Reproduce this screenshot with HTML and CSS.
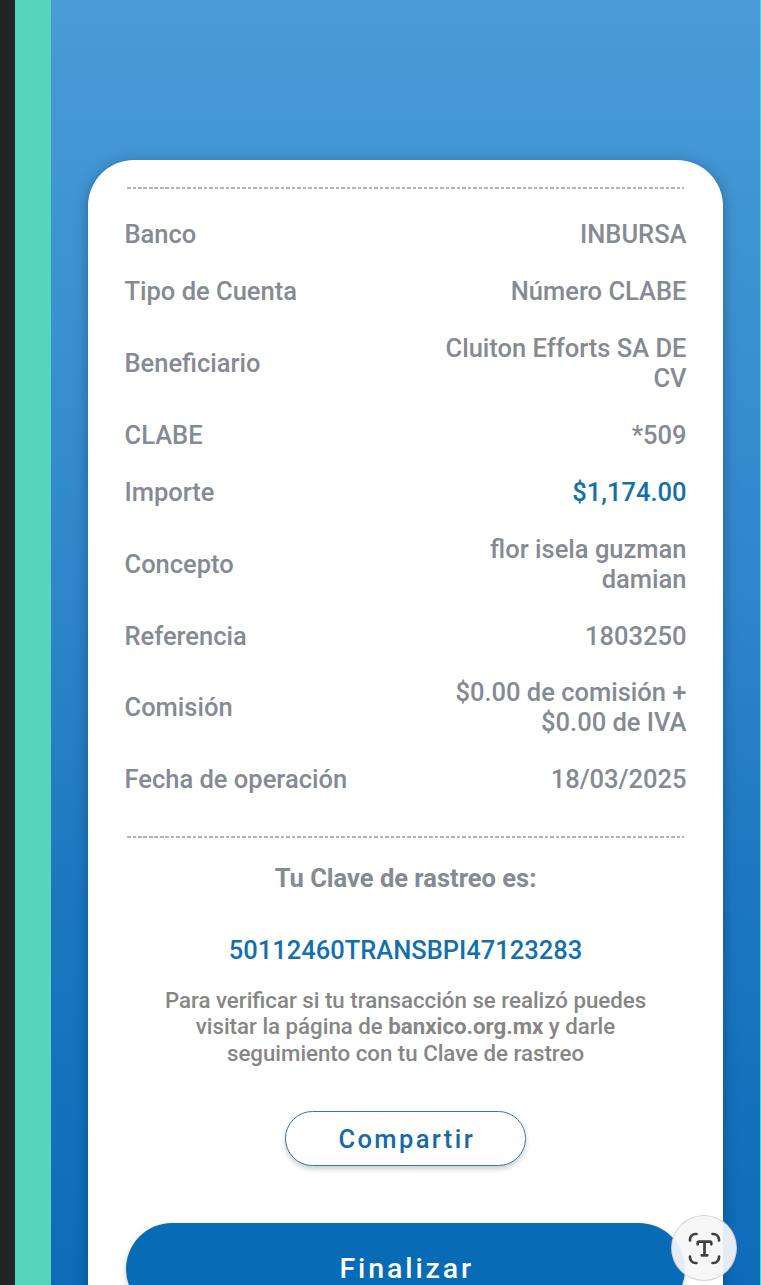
FILE: index.html
```html
<!DOCTYPE html>
<html lang="es">
<head>
  <meta charset="UTF-8">
  <meta name="viewport" content="width=device-width, initial-scale=1.0">
  <title>Comprobante</title>
  <link rel="stylesheet" href="styles.css">
</head>
<body>
  <div class="screen">
    <!-- Receipt card -->
    <main class="card">
      <div class="divider"></div>

      <dl class="details">
        <div class="row"><dt>Banco</dt><dd>INBURSA</dd></div>
        <div class="row"><dt>Tipo de Cuenta</dt><dd>Número CLABE</dd></div>
        <div class="row"><dt>Beneficiario</dt><dd>Cluiton Efforts SA DE<br>CV</dd></div>
        <div class="row"><dt>CLABE</dt><dd>*509</dd></div>
        <div class="row"><dt>Importe</dt><dd class="amount">$1,174.00</dd></div>
        <div class="row"><dt>Concepto</dt><dd>flor isela guzman<br>damian</dd></div>
        <div class="row"><dt>Referencia</dt><dd>1803250</dd></div>
        <div class="row"><dt>Comisión</dt><dd>$0.00 de comisión +<br>$0.00 de IVA</dd></div>
        <div class="row"><dt>Fecha de operación</dt><dd>18/03/2025</dd></div>
      </dl>

      <div class="divider"></div>

      <!-- Tracking key -->
      <h2 class="tracking-title">Tu Clave de rastreo es:</h2>
      <p class="tracking-key">50112460TRANSBPI47123283</p>
      <p class="note">Para verificar si tu transacción se realizó puedes<br>visitar la página de <b>banxico.org.mx</b> y darle<br>seguimiento con tu Clave de rastreo</p>

      <!-- Actions -->
      <button type="button" class="btn-share">Compartir</button>
      <button type="button" class="btn-finish">Finalizar</button>
    </main>
  </div>

  <!-- Text scan button -->
  <div class="scan-button">
    <svg width="33" height="33" viewBox="0 0 33 33" fill="none" stroke="#3f4043" stroke-width="2.7" stroke-linecap="round" stroke-linejoin="round">
      <path d="M2 8.500V7.500a5.500 5.500 0 0 1 5.500-5.500h1M24.500 2h1a5.500 5.500 0 0 1 5.500 5.500v1M31 24.500v1a5.500 5.500 0 0 1-5.500 5.500h-1M8.500 31h-1A5.500 5.500 0 0 1 2 25.500v-1"/>
      <path d="M9.700 12.300V11a1.300 1.300 0 0 1 1.300-1.300h11a1.300 1.300 0 0 1 1.300 1.300v1.300M16.500 9.700v13.600M13.700 23.300h5.600"/>
    </svg>
  </div>
</body>
</html>
```

FILE: styles.css
```css
* {
  box-sizing: border-box;
}

body {
  margin: 0;
  height: 1285px;
  display: flex;
  overflow: hidden;
  font-family: Roboto, Arial, sans-serif;
  font-weight: 500;
  color: #858a93;
  background: #232428;
}

/* Coloured frame around the app */
.screen {
  width: 746px;
  height: 1285px;
  margin-left: 15px;
  padding: 160px 37px 0 37px;
  border-left: 36px solid #56d4bc;
  border-right: 1px solid #56d4bc;
  background: linear-gradient(#4a9ad7 0, #4196d3 160px, #3b90d1 330px, #2e85cb 600px, #1c77c0 900px, #0d6bb9 1285px);
  overflow: hidden;
}

.card {
  width: 635px;
  height: 1200px;
  padding: 27px 36.5px 0;
  display: flex;
  flex-direction: column;
  border-radius: 46px;
  background: #fff;
  box-shadow: 0 3px 14px rgba(0, 30, 60, 0.38);
}

.divider {
  flex: none;
  height: 2px;
  margin: 0 2.5px;
  background: repeating-linear-gradient(90deg, #b4b4b4 0, #b4b4b4 3.5px, #fff 3.5px, #fff 5.5px);
}

.details {
  margin: 31.3px 0 40.7px;
  display: flex;
  flex-direction: column;
  gap: 27px;
}

.row {
  display: flex;
  justify-content: space-between;
  align-items: center;
  font-size: 25.5px;
  line-height: 29.9px;
}

.row dd {
  margin: 0;
  text-align: right;
}

.row .amount {
  color: #1270b0;
}

.tracking-title {
  margin: 25px 0 0;
  font-size: 25.5px;
  line-height: 30px;
  font-weight: 700;
  text-align: center;
}

.tracking-key {
  margin: 42px 0 0;
  font-size: 25.5px;
  line-height: 30px;
  text-align: center;
  color: #1270b0;
}

.note {
  margin: 22px 0 0;
  font-size: 22.25px;
  line-height: 26.4px;
  text-align: center;
  color: #868686;
}

.btn-share,
.btn-finish {
  flex: none;
  padding: 0 0 0 2.5px;
  font-family: inherit;
  font-weight: 500;
}

.btn-share {
  width: 241px;
  height: 55px;
  margin: 45px auto 0;
  border: 1.5px solid #2c7dae;
  border-radius: 28px;
  background: #fff;
  color: #1869a8;
  font-size: 25.5px;
  letter-spacing: 2.4px;
  box-shadow: 0 3px 5px rgba(0, 0, 0, 0.2);
}

.btn-finish {
  width: 559px;
  height: 92px;
  margin: 56.5px auto 0;
  border: 0;
  border-radius: 46px;
  background: #076bb6;
  color: #fff;
  font-size: 28.5px;
  letter-spacing: 2.9px;
  box-shadow: 0 3px 6px rgba(0, 0, 0, 0.2);
}

/* Floats over the page corner */
.scan-button {
  position: absolute;
  left: 671px;
  top: 1215px;
  width: 66px;
  height: 66px;
  display: flex;
  align-items: center;
  justify-content: center;
  border: 1px solid rgba(190, 195, 200, 0.7);
  border-radius: 50%;
  background: rgba(246, 246, 247, 0.93);
}
```
